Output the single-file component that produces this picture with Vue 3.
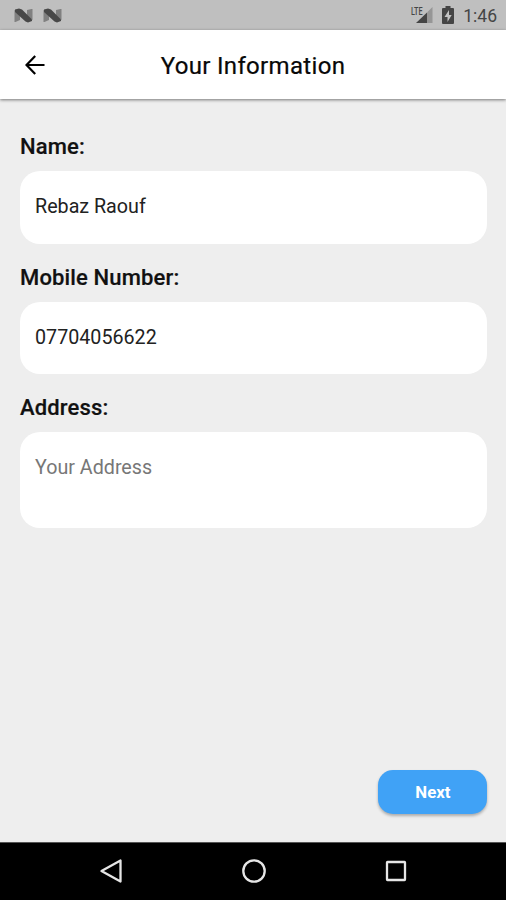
<script setup>
const fields = [
  { label: 'Name:', text: 'Rebaz Raouf', kind: 'name' },
  { label: 'Mobile Number:', text: '07704056622', kind: 'mobile' },
  { label: 'Address:', text: 'Your Address', kind: 'address' },
]
</script>

<template>
  <div class="screen">
    <div class="status">
      <div class="notifications">
        <svg v-for="n in 2" :key="n" class="n-icon" viewBox="0 0 19 15">
          <path d="M0.500 2 6 4v8L1.500 14H0.500zM13 2 17.500 1h1v11L13 10z" fill="#808080" />
          <path d="M1 1.500 5 0.500 8 1.500l10 10v1.500L14 14.500 11.500 13.500 1 4z" fill="#484848" />
        </svg>
      </div>
      <div class="system">
        <svg class="signal" viewBox="0 0 24 20">
          <text x="1" y="10" class="lte" textLength="11.500" lengthAdjust="spacingAndGlyphs">LTE</text>
          <path d="M22.500 2v16H17V7.500z" fill="#969696" />
          <path d="M6 18 17 7.500V18z" fill="#454545" />
        </svg>
        <svg class="battery" viewBox="0 0 12 18">
          <path d="M3.500 0h5v2H11q1 0 1 1v14q0 1-1 1H1q-1 0-1-1V3q0-1 1-1h2.500z" fill="#454545" />
          <path d="M7 4 2.500 11H5.500v5L9.700 9H7z" fill="#c3c3c3" />
        </svg>
        <span class="clock">1:46</span>
      </div>
    </div>

    <header class="header">
      <svg class="back" viewBox="0 0 20 20">
        <path d="M19.500 10H2M10.200 1 1.500 10l8.700 9" />
      </svg>
      <h1>Your Information</h1>
    </header>

    <main class="form">
      <section v-for="f in fields" :key="f.label" class="field" :class="f.kind">
        <h2>{{ f.label }}</h2>
        <div class="box"><span>{{ f.text }}</span></div>
      </section>
      <button class="next">Next</button>
    </main>

    <nav class="nav">
      <svg viewBox="0 0 26 26"><path d="M22.500 2.500v21L3.500 13z" /></svg>
      <svg viewBox="0 0 26 26"><circle cx="13" cy="13" r="10.700" /></svg>
      <svg viewBox="0 0 26 26"><rect x="4" y="4" width="18" height="18" rx=".5" /></svg>
    </nav>
  </div>
</template>

<style>
body {
  margin: 0;
}
</style>

<style scoped>
.screen {
  width: 506px;
  height: 900px;
  display: flex;
  flex-direction: column;
  background: #eee;
  font-family: Roboto, sans-serif;
  overflow: hidden;
}
.status {
  height: 30px;
  flex: none;
  box-sizing: border-box;
  background: #bfbfbf;
  display: flex;
  justify-content: space-between;
  padding: 0 9px 0 13.500px;
}
.notifications {
  display: flex;
  align-items: center;
  gap: 10.500px;
}
.n-icon {
  width: 19px;
  height: 15px;
}
.system {
  display: flex;
  align-items: center;
}
.signal {
  width: 24px;
  height: 20px;
  margin: 0 8.500px 0 0;
}
.lte {
  font: 500 10.500px Roboto, sans-serif;
  fill: #454545;
}
.battery {
  width: 12px;
  height: 18px;
  margin-right: 9px;
}
.clock {
  font-size: 17.500px;
  line-height: 20px;
  color: #454545;
  margin-top: 2px;
}
.header {
  height: 69px;
  flex: none;
  box-sizing: border-box;
  background: #fff;
  display: grid;
  grid-template-columns: 1fr auto 1fr;
  align-items: center;
  padding-left: 25px;
  padding-right: 25px;
  box-shadow: 0 1px 3px rgba(0, 0, 0, 0.5);
}
.back {
  width: 20px;
  height: 20px;
  fill: none;
  stroke: #000;
  stroke-width: 2.200;
}
h1 {
  margin: 2px 0 0;
  font-size: 24px;
  line-height: 30px;
  font-weight: 400;
  letter-spacing: 0.320px;
  color: #080808;
  -webkit-text-stroke: 0.200px #080808;
}
.form {
  flex: 1;
  display: flex;
  flex-direction: column;
  padding: 34px 18.600px 28px 20px;
}
.field {
  margin-bottom: 20px;
}
h2 {
  margin: 0 0 10px;
  font-size: 22px;
  line-height: 28px;
  font-weight: 500;
  letter-spacing: 0.150px;
  color: #111;
  -webkit-text-stroke: 0.200px #111;
}
.box {
  height: 72.500px;
  box-sizing: border-box;
  padding: 23px 15px;
  border-radius: 20px;
  background: #fff;
  font-size: 19.700px;
  line-height: 26px;
  color: #222;
}
.address .box {
  height: 96px;
  color: #777;
}
.next {
  margin: auto 0 0;
  align-self: flex-end;
  width: 109px;
  height: 44px;
  padding: 0;
  border: 0;
  border-radius: 15px;
  background: #40a2f6;
  color: #fff;
  font: 700 16.800px/44px Roboto, sans-serif;
  box-shadow: 0 2px 3px rgba(0, 0, 0, 0.28);
}
.nav {
  height: 58px;
  flex: none;
  box-sizing: border-box;
  background: #000;
  border-top: 1px solid #555;
  display: flex;
  justify-content: space-between;
  align-items: center;
  padding: 0 97px 1px 98px;
}
.nav svg {
  width: 26px;
  height: 26px;
  fill: none;
  stroke: #e6e6e6;
  stroke-width: 2.300;
  stroke-linejoin: round;
}
</style>
